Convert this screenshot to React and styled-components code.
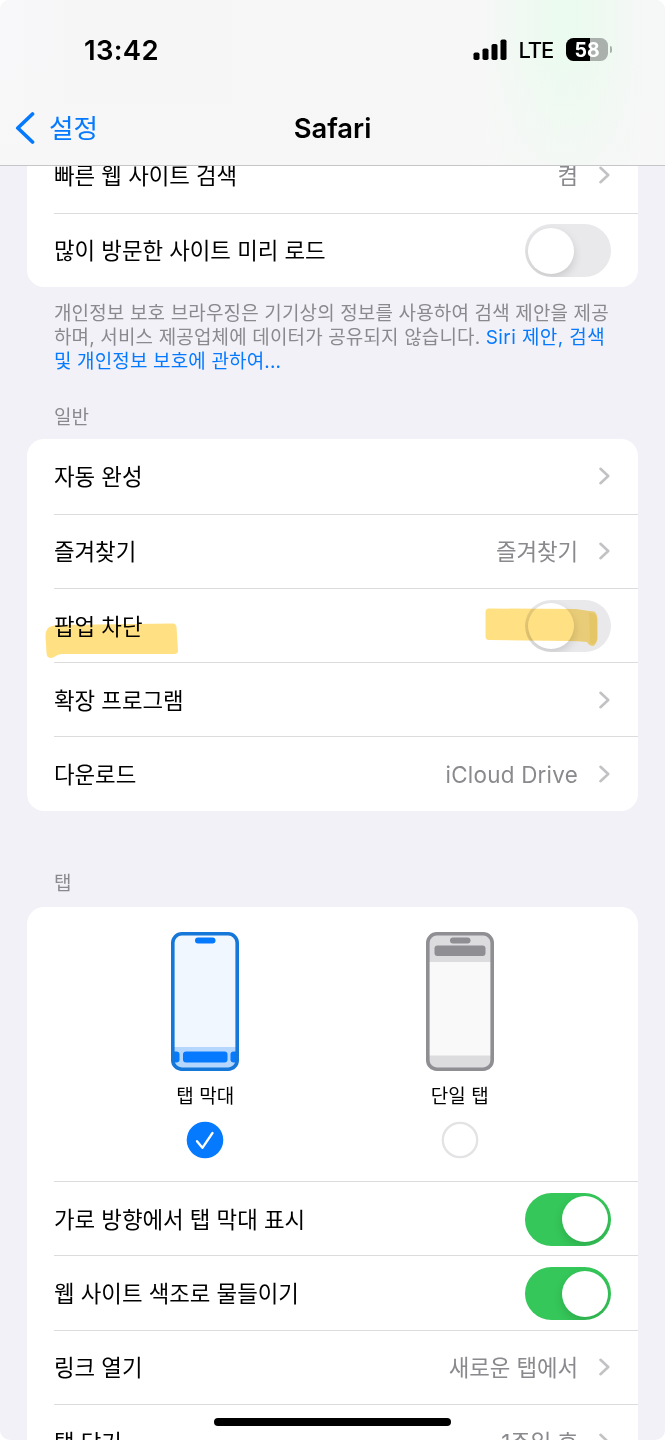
import React from "react";
import styled, { createGlobalStyle } from "styled-components";

const GlobalStyle = createGlobalStyle`
	* {
		box-sizing: border-box;
	}

	body {
		margin: 0;
		background: #fff;
		font-family: Inter, "Noto Sans CJK KR", sans-serif;
		color: #000;
	}
`;

const Screen = styled.div`
	position: relative;
	display: flex;
	flex-direction: column;
	width: 665px;
	height: 1440px;
	overflow: hidden;
	border-radius: 10px;
	background: #f2f1f7;
`;

const Header = styled.header`
	flex: none;
	height: 166px;
	border-bottom: 1px solid #c6c6c8;
	background:
		linear-gradient(180deg, transparent 30%, rgba(247, 247, 247, 0.75) 100%),
		linear-gradient(90deg, #f8f8fa 0%, #f6f6f7 12%, #f7f7f7 72%, #ebfbef 84%, #ecfaef 88%, #f6f7f7 97%);
`;

const StatusBar = styled.div`
	display: flex;
	align-items: center;
	height: 100px;
	padding: 0 53px 0 84px;
`;

const Time = styled.span`
	margin: -1px auto 0 0;
	font-size: 27.5px;
	font-weight: 600;
	letter-spacing: 0.3px;
`;

const Carrier = styled.span`
	margin: 0 13px 0 12px;
	font-size: 22px;
	font-weight: 500;
	letter-spacing: -1.2px;
`;

const Battery = styled.div`
	display: flex;
	align-items: center;
	gap: 2px;
	margin-top: -1px;
`;

const BatteryBody = styled.div`
	display: flex;
	align-items: center;
	justify-content: center;
	width: 42px;
	height: 23px;
	border-radius: 7.5px;
	background: linear-gradient(90deg, #000 58%, #aab0ac 58%);
	color: #fff;
	font-size: 19.5px;
	font-weight: 700;
`;

const BatteryTip = styled.div`
	width: 2px;
	height: 7px;
	border-radius: 0 2px 2px 0;
	background: #aab0ac;
`;

const NavBar = styled.nav`
	display: grid;
	grid-template-columns: 1fr auto 1fr;
	align-items: center;
	height: 56px;
	padding: 0 15px;
`;

const Back = styled.div`
	display: flex;
	align-items: center;
	gap: 14px;
	color: #067aff;
	font-size: 26.7px;

	span {
		margin-top: -4px;
	}
`;

const Title = styled.h1`
	margin: -1px 0 0;
	font-size: 27.4px;
	font-weight: 600;
`;

const Content = styled.main`
	flex: 1;
	min-height: 0;
	overflow: hidden;
	padding: 0 27px;
`;

const Group = styled.section`
	margin-top: ${(props) => props.$top || 0}px;
	border-radius: 17px;
	background: #fff;
	overflow: hidden;
`;

const Row = styled.div`
	position: relative;
	display: flex;
	align-items: center;
	height: 74.3px;
	margin-left: 27px;
	padding-right: 27px;
	border-top: ${(props) => (props.$first ? "0" : "1px solid #dcdcde")};
	font-size: 22.4px;
`;

const Label = styled.span`
	margin: -2px auto 0 0;
	letter-spacing: -0.05px;
`;

const Value = styled.span`
	margin: ${(props) => (props.$latin ? "1px" : "-2px")} 20px 0 0;
	color: #8a8a8e;
	letter-spacing: ${(props) => (props.$latin ? "0.25px" : "-0.1px")};
`;

const Switch = styled.div`
	display: flex;
	align-items: center;
	justify-content: ${(props) => (props.$on ? "flex-end" : "flex-start")};
	width: 86px;
	height: 52.6px;
	margin: 1px 0.5px 0 0;
	padding: 3px;
	border-radius: 27px;
	overflow: hidden;
	background: ${(props) => (props.$on ? "#35c759" : "#e9e9eb")};
`;

const Knob = styled.div`
	width: 46px;
	height: 46px;
	border-radius: 50%;
	background: #fff;
	box-shadow: 0 4px 10px rgba(0, 0, 0, 0.14);
`;

const Footnote = styled.p`
	margin: 15px 0 0 27px;
	font-size: 19px;
	line-height: 24px;
	letter-spacing: 0.14px;
	color: #8a8a8e;
	white-space: nowrap;

	em {
		font-style: normal;
		color: #067aff;
	}
`;

const SiriLink = styled.em`
	letter-spacing: 0.4px;
`;

const SectionTitle = styled.h2`
	height: 24px;
	margin: ${(props) => props.$top}px 0 0 27px;
	font-size: 19px;
	font-weight: 400;
	line-height: 24px;
	color: #8a8a8e;
`;

const Picker = styled.div`
	display: grid;
	grid-template-columns: 1fr 1fr;
	height: 274.3px;
	padding: 25px 51px 0;
`;

const Choice = styled.div`
	display: flex;
	flex-direction: column;
	align-items: center;
`;

const ChoiceName = styled.span`
	margin: 12.5px 0 9.5px;
	font-size: 19px;
	line-height: 28px;
`;

const Marker = styled.svg`
	position: absolute;
	left: ${(props) => props.$left}px;
	top: ${(props) => props.$top}px;
	mix-blend-mode: multiply;
	filter: blur(0.6px);
`;

const HomeIndicator = styled.div`
	position: absolute;
	left: 214px;
	bottom: 14px;
	width: 237px;
	height: 8px;
	border-radius: 4px;
	background: #000;
`;

const Chevron = () => (
	<svg width="13" height="18" viewBox="0 0 13 18" fill="none">
		<path
			d="M2.5 1.8L10.2 9l-7.7 7.2"
			stroke="#c2c2c5"
			strokeWidth="2.6"
			strokeLinecap="round"
			strokeLinejoin="round"
		/>
	</svg>
);

const Signal = () => (
	<svg width="34" height="22" viewBox="0 0 34 22">
		<rect x="0.5" y="13.5" width="6" height="7.5" rx="1.8" />
		<rect x="9.5" y="9.5" width="6" height="11.5" rx="1.8" />
		<rect x="18.5" y="5" width="6" height="16" rx="1.8" />
		<rect x="27.5" y="0.5" width="6" height="20.5" rx="1.8" />
	</svg>
);

const TabBarPhone = () => (
	<svg width="68" height="139" viewBox="0 0 68 139">
		<clipPath id="screen">
			<rect x="3" y="3" width="62" height="133" rx="7" />
		</clipPath>
		<rect x="1.5" y="1.5" width="65" height="136" rx="9" fill="#f0f7ff" />
		<g clipPath="url(#screen)">
			<path d="M0 115h68v24H0z" fill="#b5d7fd" />
			<rect x="-6" y="119.5" width="14.5" height="11" rx="3" fill="#067aff" />
			<rect x="12" y="119.5" width="44.5" height="11" rx="3" fill="#067aff" />
			<rect x="59.5" y="119.5" width="14.5" height="11" rx="3" fill="#067aff" />
		</g>
		<rect x="24" y="5.5" width="20.5" height="6" rx="3" fill="#067aff" />
		<rect x="1.8" y="1.8" width="64.4" height="135.4" rx="9" fill="none" stroke="#1577d8" strokeWidth="3.6" />
	</svg>
);

const SingleTabPhone = () => (
	<svg width="68" height="139" viewBox="0 0 68 139">
		<rect x="1.5" y="1.5" width="65" height="136" rx="9" fill="#dcdcde" />
		<path d="M2 30h64v93.5H2z" fill="#f9f9f9" />
		<rect x="24" y="5.5" width="20.5" height="6" rx="3" fill="#8e8e93" />
		<rect x="8.5" y="13.5" width="51" height="10.5" rx="3" fill="#8e8e93" />
		<rect x="1.8" y="1.8" width="64.4" height="135.4" rx="9" fill="none" stroke="#8e8e93" strokeWidth="3.6" />
	</svg>
);

const Radio = ({ checked }) => (
	<svg width="38" height="38" viewBox="0 0 38 38" fill="none">
		{checked ? (
			<>
				<circle cx="19" cy="19" r="18.3" fill="#067aff" />
				<path
					d="M11 20.2l5.4 6.6L26.5 12"
					stroke="#fff"
					strokeWidth="2.3"
					strokeLinecap="round"
					strokeLinejoin="round"
				/>
			</>
		) : (
			<circle cx="19" cy="19" r="17.2" stroke="#e3e3e5" strokeWidth="2.3" />
		)}
	</svg>
);

const LinkRow = ({ name, value, first, latin }) => (
	<Row $first={first}>
		<Label>{name}</Label>
		{value && <Value $latin={latin}>{value}</Value>}
		<Chevron />
	</Row>
);

const ToggleRow = ({ name, on, children }) => (
	<Row>
		<Label>{name}</Label>
		<Switch $on={on}>
			<Knob />
		</Switch>
		{children}
	</Row>
);

const App = () => {
	return (
		<Screen>
			<GlobalStyle />
			<Header>
				<StatusBar>
					<Time>13:42</Time>
					<Signal />
					<Carrier>LTE</Carrier>
					<Battery>
						<BatteryBody>58</BatteryBody>
						<BatteryTip />
					</Battery>
				</StatusBar>
				<NavBar>
					<Back>
						<svg width="20" height="32" viewBox="0 0 20 32" fill="none">
							<path
								d="M17.5 2L2.8 16l14.7 14"
								stroke="#067aff"
								strokeWidth="3.7"
								strokeLinecap="round"
								strokeLinejoin="round"
							/>
						</svg>
						<span>설정</span>
					</Back>
					<Title>Safari</Title>
				</NavBar>
			</Header>
			<Content>
				<Group $top={-27.7}>
					<LinkRow first name="빠른 웹 사이트 검색" value="켬" />
					<ToggleRow name="많이 방문한 사이트 미리 로드" />
				</Group>
				<Footnote>
					개인정보 보호 브라우징은 기기상의 정보를 사용하여 검색 제안을 제공
					<br />
					하며, 서비스 제공업체에 데이터가 공유되지 않습니다. <SiriLink>Siri 제안, 검색</SiriLink>
					<br />
					<em>및 개인정보 보호에 관하여...</em>
				</Footnote>

				<SectionTitle $top={32}>일반</SectionTitle>
				<Group $top={9.4}>
					<LinkRow first name="자동 완성" />
					<LinkRow name="즐겨찾기" value="즐겨찾기" />
					<ToggleRow name="팝업 차단">
						<Marker $left={-10} $top={33} width="136" height="38" viewBox="0 0 136 38">
							<path
								d="M4 6Q8 3 17 3L128 1.5Q132 1 132.5 5L134 29Q134 32 130 32L18 32Q14 32 10 35Q3 38 2.5 31L1.5 14Q1.5 9 4 6Z"
								fill="#ffe082"
							/>
						</Marker>
						<Marker $left={430} $top={18.5} width="116" height="42" viewBox="0 0 116 42">
							<path
								d="M4 1.5L92 2Q106 4 110 4.5Q113 6 113.5 12L113.5 32Q112 38 109 39Q105 39 103 35Q94 34 84 34L5 33Q1.5 33 1.5 29L1.5 5Q1.5 2 4 1.5Z"
								fill="#ffe082"
							/>
							<path d="M105 6Q112 5 113 12V32Q110 40 106 36Z" fill="#fbd970" />
						</Marker>
					</ToggleRow>
					<LinkRow name="확장 프로그램" />
					<LinkRow name="다운로드" value="iCloud Drive" latin />
				</Group>

				<SectionTitle $top={61.6}>탭</SectionTitle>
				<Group $top={10.4}>
					<Picker>
						<Choice>
							<TabBarPhone />
							<ChoiceName>탭 막대</ChoiceName>
							<Radio checked />
						</Choice>
						<Choice>
							<SingleTabPhone />
							<ChoiceName>단일 탭</ChoiceName>
							<Radio />
						</Choice>
					</Picker>
					<ToggleRow name="가로 방향에서 탭 막대 표시" on />
					<ToggleRow name="웹 사이트 색조로 물들이기" on />
					<LinkRow name="링크 열기" value="새로운 탭에서" />
					<LinkRow name="탭 닫기" value="1주일 후" />
				</Group>
			</Content>
			<HomeIndicator />
		</Screen>
	);
};

export default App;
